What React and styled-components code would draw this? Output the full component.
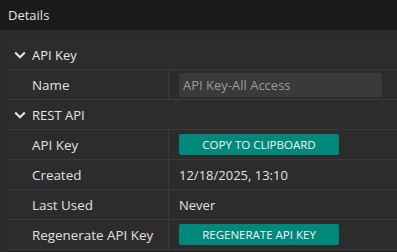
import React from 'react';
import styled, { createGlobalStyle } from 'styled-components';

const GlobalStyle = createGlobalStyle`
  html, body {
    margin: 0;
    padding: 0;
    background: #2a2a2a;
    font-family: "Open Sans", "Noto Sans", sans-serif;
    color: #e2e2e2;
  }
`;

const Page = styled.div`
  width: 397px;
  height: 252px;
  overflow: hidden;
  background: #2a2a2a;
`;

const TopBar = styled.div`
  height: 30px;
  background: #1b1b1b;
  display: flex;
  align-items: center;
  padding-left: 8px;
  font-size: 13px;
  color: #e6e6e6;
`;

const Panel = styled.div`
  margin: 10px 0 0 8px;
  background: #2c2c2c;
`;

const SectionHead = styled.div`
  height: 29px;
  display: flex;
  align-items: center;
  gap: 6px;
  padding-left: 6px;
  border-bottom: 1px solid #3a3a3a;
  font-size: 13px;
  color: #e6e6e6;
`;

const Row = styled.div`
  display: grid;
  grid-template-columns: 161px 1fr;
  height: 29px;
  border-bottom: 1px solid #3a3a3a;
  font-size: 13px;
`;

const Label = styled.div`
  display: flex;
  align-items: center;
  padding-left: 24px;
  border-right: 1px solid #3a3a3a;
  color: #e2e2e2;
  font-size: 13.4px;
`;

const Value = styled.div`
  display: flex;
  align-items: center;
  padding-left: 10px;
  padding-right: 15px;
  color: #e2e2e2;
`;

const Field = styled.div`
  flex: 1;
  height: 24px;
  background: #3a3a3a;
  border-radius: 2px;
  display: flex;
  align-items: center;
  padding-left: 4px;
  color: #9a9a9a;
`;

const Action = styled.button`
  width: 160px;
  height: 21px;
  border: none;
  border-radius: 2px;
  background: #00897b;
  color: #f2f2f2;
  font-family: "Open Sans", "Noto Sans", sans-serif;
  font-size: 11.5px;
  text-transform: uppercase;
  padding: 0;
  cursor: pointer;
`;

const Chevron = () => (
  <svg width="12" height="12" viewBox="0 0 12 12">
    <path d="M1.2 3.5 L6 8.3 L10.8 3.5" fill="none" stroke="#e6e6e6" strokeWidth="2" />
  </svg>
);

export default function App() {
  return (
    <Page>
      <GlobalStyle />
      <TopBar>Details</TopBar>
      <Panel>
        <SectionHead><Chevron />API Key</SectionHead>
        <Row>
          <Label>Name</Label>
          <Value><Field>API Key-All Access</Field></Value>
        </Row>
        <SectionHead><Chevron />REST API</SectionHead>
        <Row>
          <Label>API Key</Label>
          <Value><Action>Copy to clipboard</Action></Value>
        </Row>
        <Row>
          <Label>Created</Label>
          <Value>12/18/2025, 13:10</Value>
        </Row>
        <Row>
          <Label>Last Used</Label>
          <Value>Never</Value>
        </Row>
        <Row>
          <Label>Regenerate API Key</Label>
          <Value><Action>Regenerate API key</Action></Value>
        </Row>
      </Panel>
    </Page>
  );
}
